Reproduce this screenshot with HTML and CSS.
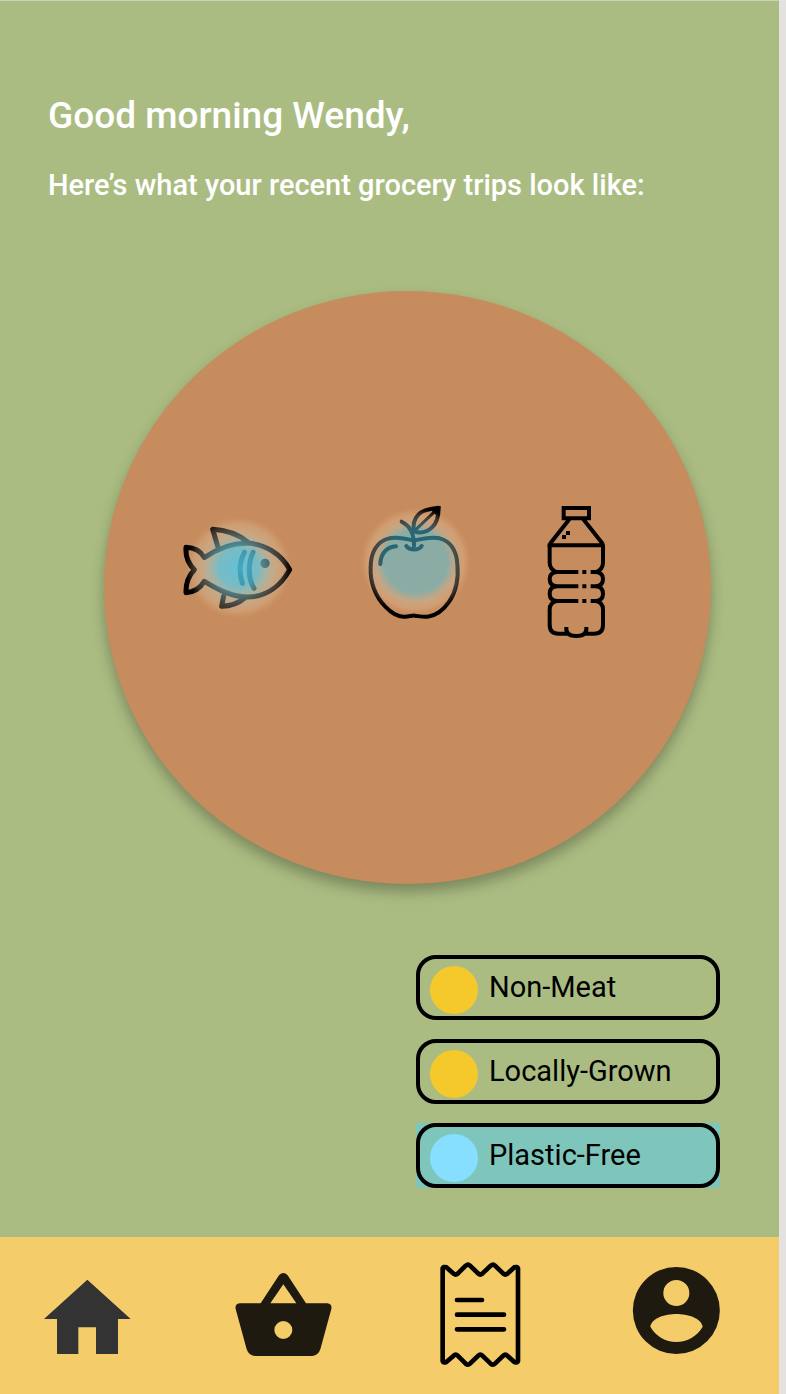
FILE: index.html
```html
<!DOCTYPE html>
<html lang="en">
<head>
<meta charset="utf-8">
<meta name="viewport" content="width=device-width, initial-scale=1">
<title>Grocery trips</title>
<link rel="stylesheet" href="styles.css">
</head>
<body>
<div class="app">
  <header class="greeting">
    <h1 class="greeting-title">Good morning Wendy,</h1>
    <p class="greeting-text">Here’s what your recent grocery trips look like:</p>
  </header>

  <main class="content">
    <div class="plate">
      <svg class="food food-fish" viewBox="0 0 450 390" role="img" aria-label="Fish">
        <defs>
          <radialGradient id="fish-glow">
            <stop offset="0" stop-color="#50ccf0" stop-opacity=".82"/>
            <stop offset=".38" stop-color="#5ccce8" stop-opacity=".74"/>
            <stop offset=".68" stop-color="#c4d6c8" stop-opacity=".38"/>
            <stop offset=".85" stop-color="#e8d4b8" stop-opacity=".24"/>
            <stop offset="1" stop-color="#e8c8a0" stop-opacity="0"/>
          </radialGradient>
        </defs>
        <g fill="none" stroke="#000" stroke-width="15" stroke-linecap="round" stroke-linejoin="round">
          <path d="M118 173C158 146 199 129 248 130C300 132 349 162 374 209C347 259 303 290 248 291C200 291 158 268 118 244C105 266 88 277 63 278C62 248 70 228 88 209C69 190 61 167 63 142C89 143 107 153 118 173Z"/>
          <path d="M160 145L143 88C182 90 217 101 248 126M176 288L170 319C200 318 219 311 239 294"/>
          <path d="M238 157C223 187 222 219 232 250M264 157C248 193 249 235 267 265"/>
        </g>
        <circle cx="300" cy="190" r="14"/>
        <ellipse cx="220" cy="203" rx="158" ry="152" fill="url(#fish-glow)"/>
      </svg>

      <svg class="food food-apple" viewBox="0 0 420 450" role="img" aria-label="Apple">
        <defs>
          <radialGradient id="apple-glow">
            <stop offset="0" stop-color="#50ccec" stop-opacity=".5"/>
            <stop offset=".58" stop-color="#50ccec" stop-opacity=".5"/>
            <stop offset=".74" stop-color="#c4d4c4" stop-opacity=".36"/>
            <stop offset=".87" stop-color="#f4ccb0" stop-opacity=".26"/>
            <stop offset="1" stop-color="#e8b890" stop-opacity="0"/>
          </radialGradient>
        </defs>
        <g fill="none" stroke="#000" stroke-width="12" stroke-linecap="round" stroke-linejoin="round">
          <path d="M207 152C183 146 158 140 133 145C94 154 77 190 77 233C75 276 91 320 121 350C140 370 160 382 180 380C195 379 201 376 210 377C220 378 234 382 248 380C273 377 296 359 313 334C334 303 341 264 337 223C335 185 318 153 284 145C257 140 231 146 207 152Z"/>
          <path d="M170 95C194 107 208 130 207 168M184 168C194 182 221 182 230 168M106 222C107 192 124 171 153 169"/>
          <path d="M207 124C201 94 216 69 241 61C253 57 267 54 281 53C281 77 277 100 259 114C245 126 225 130 207 124Z"/>
          <path d="M207 124L278 56" stroke-width="9"/>
        </g>
        <path d="M256 57L287 48L279 80L265 68Z"/>
        <ellipse cx="212" cy="215" rx="166" ry="162" fill="url(#apple-glow)"/>
      </svg>

      <svg class="food food-bottle" viewBox="-45 -15 405 450" role="img" aria-label="Plastic bottle">
        <g fill="none" stroke="#000" stroke-width="12">
          <path d="M101 39H177V70H101ZM118 73L60 146M160 73L218 146M53 151H224"/>
          <path d="M59 149V203Q59 223 80 231H145M219 149V203Q219 223 198 231H182"/>
          <path d="M80 231Q59 233 59 252Q59 272 80 274H145M198 231Q219 233 219 252Q219 272 198 274H182"/>
          <path d="M80 274Q59 276 59 296Q59 316 80 318H145M198 274Q219 276 219 296Q219 316 198 318H182"/>
          <path d="M80 318Q59 322 59 344V389Q59 416 86 416H112M198 318Q219 322 219 344V389Q219 416 192 416H166"/>
          <path d="M103 402H109C109 416 119 423 139 423S169 416 169 402H175"/>
          <path d="M157 231H169M157 274H169M157 318H169"/>
        </g>
        <path d="M108 108H120V120H108ZM96 120H108V132H96Z"/>
      </svg>
    </div>

    <div class="filters">
      <button class="filter" type="button" aria-pressed="false"><span class="dot"></span><span>Non-Meat</span></button>
      <button class="filter" type="button" aria-pressed="false"><span class="dot"></span><span>Locally-Grown</span></button>
      <div class="filter-highlight">
        <button class="filter" type="button" aria-pressed="true"><span class="dot dot-active"></span><span>Plastic-Free</span></button>
      </div>
    </div>
  </main>

  <nav class="tabs" aria-label="Main">
    <a class="tab" href="#home" aria-label="Home">
      <svg class="tab-icon" viewBox="114 75 300 360">
        <path fill="#333" d="M262 149L392 267H354V372H288V292H235V372H171V267H132Z"/>
      </svg>
    </a>
    <a class="tab" href="#basket" aria-label="Basket">
      <svg class="tab-icon" viewBox="703 75 300 360">
        <path fill="#1f1a0f" fill-rule="evenodd" d="M783 220L838 136Q851 122 864 136L919 220H983Q998 222 995 237L962 358Q956 376 938 378H765Q747 376 741 358L708 237Q705 222 720 220ZM812 220H890L851 163ZM851 273A27 27 0 1 0 851 327A27 27 0 1 0 851 273Z"/>
      </svg>
    </a>
    <a class="tab" href="#receipts" aria-label="Receipts">
      <svg class="tab-icon" viewBox="92 75 300 360">
        <g fill="none" stroke="#000" stroke-width="14" stroke-linecap="round" stroke-linejoin="round">
          <path d="M127 115Q129 109 138 112L160 131Q166 136 172 131L196 107Q203 101 209 107L234 131Q240 136 246 131L271 107Q278 101 284 107L309 131Q315 136 321 131L342 112Q351 109 353 115V393Q351 399 342 396L321 377Q315 371 309 377L284 401Q278 407 271 401L246 377Q240 371 234 377L209 401Q203 407 196 401L172 377Q166 371 160 377L138 396Q129 399 127 393Z"/>
          <path d="M170 210H245M170 254H311M170 298H311"/>
        </g>
      </svg>
    </a>
    <a class="tab" href="#account" aria-label="Account">
      <svg class="tab-icon" viewBox="681 75 300 360">
        <path fill="#1f1a0f" fill-rule="evenodd" d="M829 111A130 130 0 1 0 829 372A130 130 0 1 0 829 111ZM829 150A39 39 0 1 1 829 228A39 39 0 1 1 829 150ZM751 290C755 264 796 252 829 252S904 264 908 290C891 319 862 336 829 336S768 319 751 290Z"/>
      </svg>
    </a>
  </nav>
</div>
</body>
</html>
```

FILE: styles.css
```css
* {
  box-sizing: border-box;
}

body {
  margin: 0;
  background: #e3e2e1;
  font-family: Roboto, "Liberation Sans", sans-serif;
}

.app {
  display: flex;
  flex-direction: column;
  min-height: 100vh;
  margin-right: 7px;
  border-top: 1px solid #c9d3b2;
  background: #abbc82;
}

.greeting {
  padding: 92px 48px 0;
  color: #fff;
}

.greeting-title {
  margin: 0;
  font-size: 37px;
  font-weight: 500;
  line-height: 46px;
}

.greeting-text {
  margin: 28px 0 0;
  font-size: 29px;
  font-weight: 500;
  line-height: 36px;
}

.content {
  display: flex;
  flex-direction: column;
  flex: 1;
  padding: 88px 59px 49px 104px;
}

.plate {
  display: flex;
  align-items: center;
  justify-content: center;
  gap: 30px;
  margin-right: 9px;
  padding-bottom: 45px;
  aspect-ratio: 607 / 593;
  border-radius: 50%;
  background: #c68c5d;
  box-shadow: 0 8px 14px rgba(0, 0, 0, 0.28);
}

.food {
  flex: none;
}

.food-fish {
  width: 150px;
  height: 130px;
}

.food-apple {
  width: 140px;
  height: 150px;
}

.food-bottle {
  width: 135px;
  height: 150px;
}

.filters {
  display: flex;
  flex-direction: column;
  align-self: flex-end;
  gap: 19px;
  width: 304px;
  margin-top: 71px;
}

.filter {
  display: flex;
  align-items: flex-start;
  gap: 11px;
  width: 100%;
  height: 65px;
  padding: 7px 10px 2px;
  border: 4px solid #000;
  border-radius: 20px;
  background: none;
  color: #000;
  font: 400 29px/42px Roboto, "Liberation Sans", sans-serif;
}

.filter-highlight {
  background: #7ec6bb;
}

.dot {
  flex: none;
  width: 48px;
  height: 48px;
  border-radius: 50%;
  background: #f5c92c;
}

.dot-active {
  background: #86dfff;
}

.tabs {
  display: flex;
  justify-content: space-between;
  padding: 18px 52px 19px 38px;
  background: #f4cc6a;
}

.tab {
  display: block;
}

.tab-icon {
  display: block;
  width: 100px;
  height: 120px;
}
```
